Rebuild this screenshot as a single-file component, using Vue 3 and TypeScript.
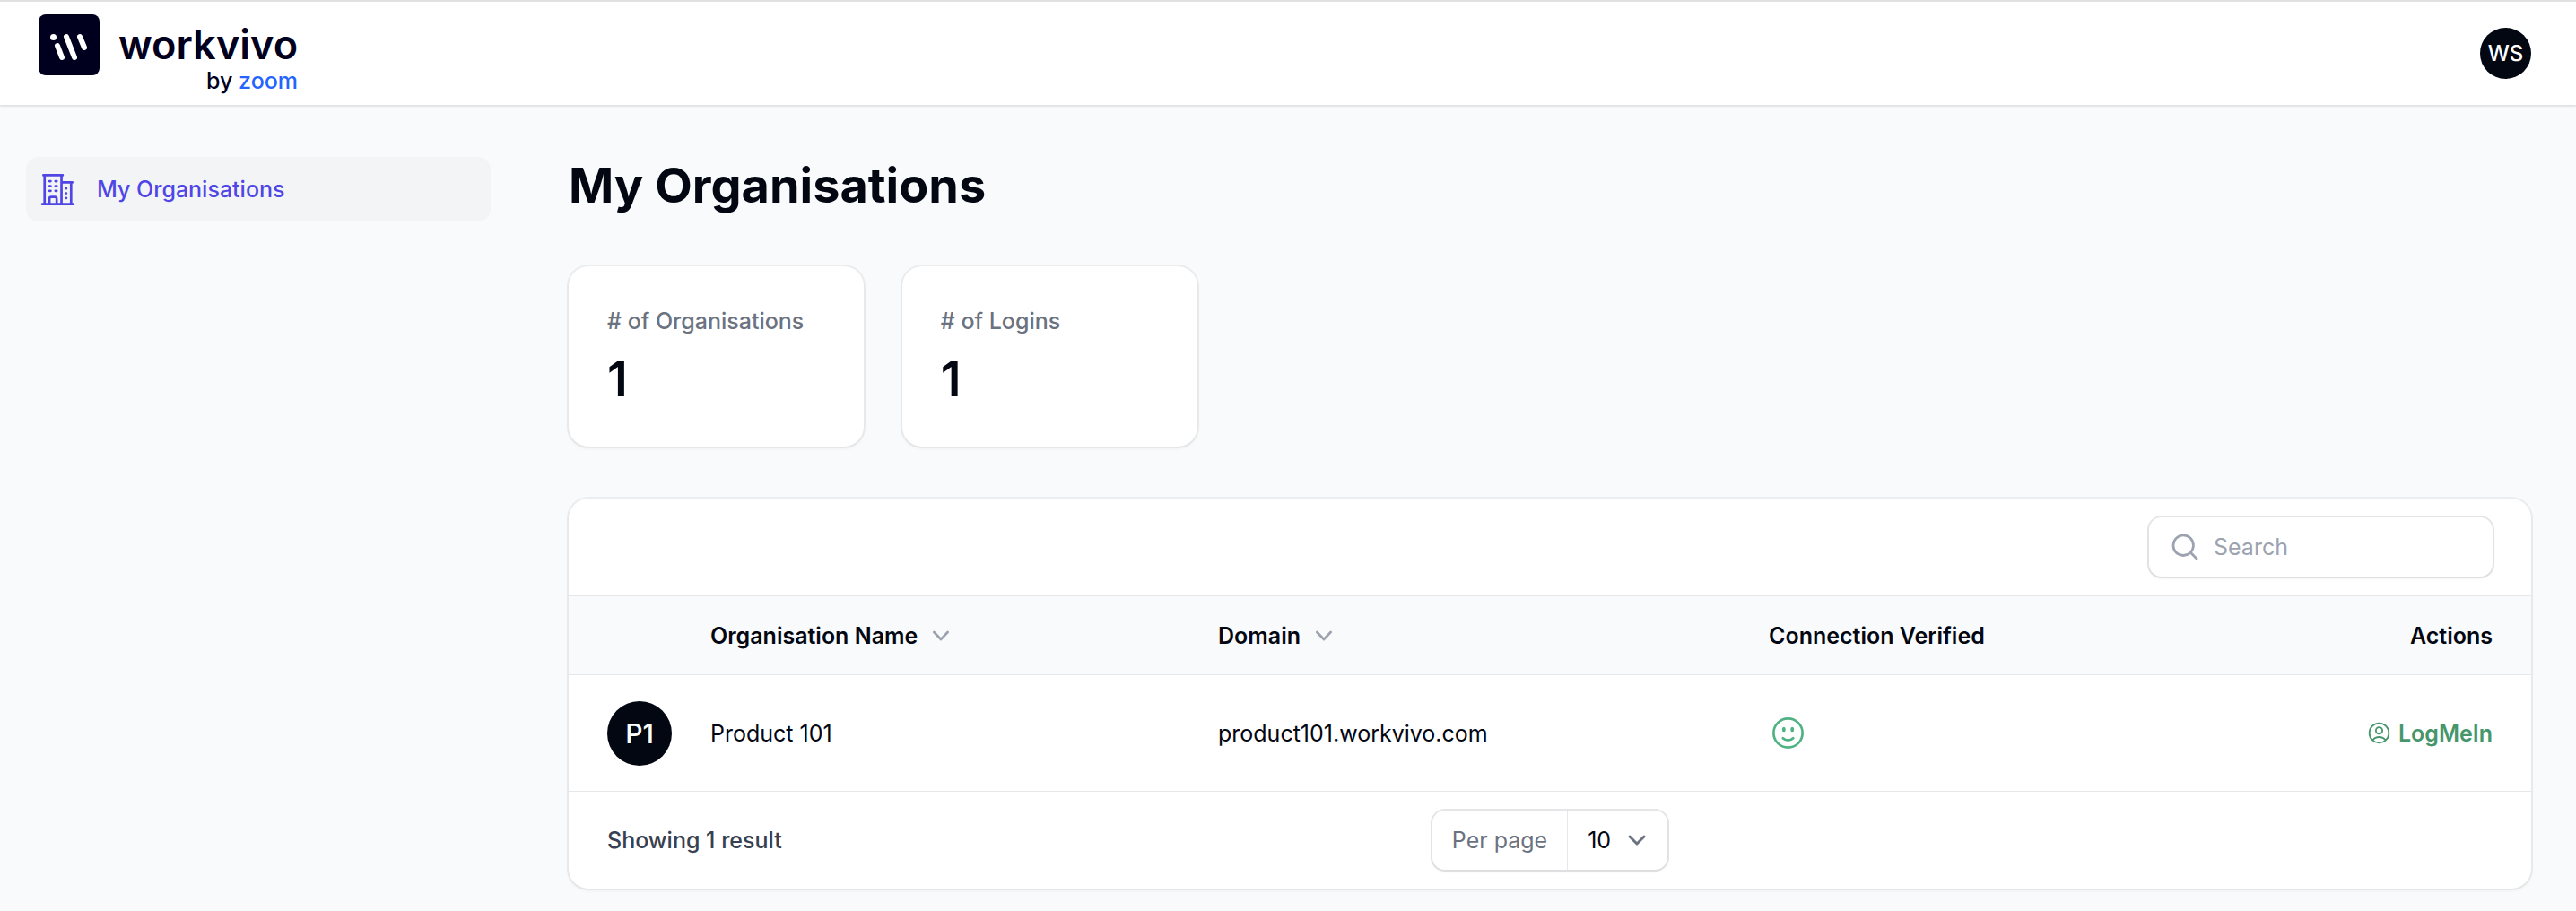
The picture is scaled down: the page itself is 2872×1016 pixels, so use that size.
<script setup lang="ts">
import { computed, ref } from 'vue'

interface Organisation {
  initials: string
  name: string
  domain: string
}

const stats = [
  { label: '# of Organisations', value: 1 },
  { label: '# of Logins', value: 1 },
]

const organisations: Organisation[] = [
  { initials: 'P1', name: 'Product 101', domain: 'product101.workvivo.com' },
]

const search = ref('')
const perPage = ref(10)

const rows = computed(() => {
  const term = search.value.trim().toLowerCase()
  return organisations
    .filter((o) => o.name.toLowerCase().includes(term) || o.domain.includes(term))
    .slice(0, perPage.value)
})

const summary = computed(() => {
  const n = rows.value.length
  return `Showing ${n} result${n === 1 ? '' : 's'}`
})
</script>

<template>
  <div class="page">
    <header class="topbar">
      <a class="brand" href="#" aria-label="workvivo by zoom">
        <svg class="brand-mark" viewBox="0 0 68 68" aria-hidden="true">
          <rect width="68" height="68" rx="8" fill="#00001e" />
          <g stroke="#fff" stroke-width="6" stroke-linecap="round">
            <path d="M21 35 26 48M31 25 40 48M46 25 51 37" />
          </g>
          <circle cx="16.500" cy="25.500" r="3.500" fill="#fff" />
        </svg>
        <span class="brand-words">
          <span class="brand-name">workvivo</span>
          <span class="brand-by">by <span class="brand-zoom">zoom</span></span>
        </span>
      </a>
      <button class="user" type="button" aria-label="User menu">WS</button>
    </header>

    <div class="body">
      <nav class="sidebar">
        <a class="nav-item" href="#">
          <svg class="nav-icon" viewBox="0 0 24 24" fill="none" stroke="currentColor" stroke-width="1.500" stroke-linecap="round" stroke-linejoin="round" aria-hidden="true">
            <path d="M2.250 21h19.500m-18-18v18m10.500-18v18m6-13.500V21M6.750 6.750h.750m-.750 3h.750m-.750 3h.750m3-6h.750m-.750 3h.750m-.750 3h.750M6.750 21v-3.375c0-.621.504-1.125 1.125-1.125h2.250c.621 0 1.125.504 1.125 1.125V21M3 3h12m-.750 4.500H21m-3.750 3.750h.008v.008h-.008v-.008Zm0 3h.008v.008h-.008v-.008Zm0 3h.008v.008h-.008v-.008Z" />
          </svg>
          <span>My Organisations</span>
        </a>
      </nav>

      <main class="main">
        <h1 class="title">My Organisations</h1>

        <section class="stats" aria-label="Statistics">
          <div v-for="stat in stats" :key="stat.label" class="card">
            <span class="card-label">{{ stat.label }}</span>
            <span class="card-value">{{ stat.value }}</span>
          </div>
        </section>

        <section class="panel">
          <div class="toolbar">
            <label class="search">
              <svg class="search-icon" viewBox="0 0 20 20" fill="currentColor" aria-hidden="true">
                <path fill-rule="evenodd" clip-rule="evenodd" d="M9 3.500a5.500 5.500 0 1 0 0 11 5.500 5.500 0 0 0 0-11ZM2 9a7 7 0 1 1 12.452 4.391l3.328 3.329a.750.750 0 1 1-1.060 1.060l-3.329-3.328A7 7 0 0 1 2 9Z" />
              </svg>
              <input v-model="search" class="search-input" type="search" placeholder="Search" aria-label="Search" />
            </label>
          </div>

          <table class="table">
            <thead>
              <tr>
                <th class="col-avatar"></th>
                <th class="col-name">
                  <button class="sort" type="button">
                    Organisation Name
                    <svg class="chevron" viewBox="0 0 20 20" fill="currentColor" aria-hidden="true">
                      <path fill-rule="evenodd" clip-rule="evenodd" d="M5.230 7.210a.750.750 0 0 1 1.060.020L10 11.168l3.710-3.938a.750.750 0 1 1 1.080 1.040l-4.250 4.500a.750.750 0 0 1-1.080 0l-4.250-4.500a.750.750 0 0 1 .020-1.060Z" />
                    </svg>
                  </button>
                </th>
                <th class="col-domain">
                  <button class="sort" type="button">
                    Domain
                    <svg class="chevron" viewBox="0 0 20 20" fill="currentColor" aria-hidden="true">
                      <path fill-rule="evenodd" clip-rule="evenodd" d="M5.230 7.210a.750.750 0 0 1 1.060.020L10 11.168l3.710-3.938a.750.750 0 1 1 1.080 1.040l-4.250 4.500a.750.750 0 0 1-1.080 0l-4.250-4.500a.750.750 0 0 1 .020-1.060Z" />
                    </svg>
                  </button>
                </th>
                <th class="col-verified">Connection Verified</th>
                <th class="col-actions">Actions</th>
              </tr>
            </thead>
            <tbody>
              <tr v-for="row in rows" :key="row.domain">
                <td class="col-avatar"><span class="avatar">{{ row.initials }}</span></td>
                <td>{{ row.name }}</td>
                <td>{{ row.domain }}</td>
                <td>
                  <svg class="smile" viewBox="0 0 24 24" fill="none" stroke="currentColor" stroke-width="1.500" stroke-linecap="round" stroke-linejoin="round" role="img" aria-label="Verified">
                    <path d="M15.182 15.182a4.500 4.500 0 0 1-6.364 0M21 12a9 9 0 1 1-18 0 9 9 0 0 1 18 0ZM9.750 9.750c0 .414-.168.750-.375.750S9 10.164 9 9.750 9.168 9 9.375 9s.375.336.375.750Zm-.375 0h.008v.015h-.008V9.750Zm5.625 0c0 .414-.168.750-.375.750s-.375-.336-.375-.750.168-.750.375-.750.375.336.375.750Zm-.375 0h.008v.015h-.008V9.750Z" />
                  </svg>
                </td>
                <td class="col-actions">
                  <a class="login" href="#">
                    <svg class="login-icon" viewBox="0 0 24 24" fill="none" stroke="currentColor" stroke-width="1.500" stroke-linecap="round" stroke-linejoin="round" aria-hidden="true">
                      <path d="M17.982 18.725A7.488 7.488 0 0 0 12 15.750a7.488 7.488 0 0 0-5.982 2.975m11.963 0a9 9 0 1 0-11.963 0m11.963 0A8.966 8.966 0 0 1 12 21a8.966 8.966 0 0 1-5.982-2.275M15 9.750a3 3 0 1 1-6 0 3 3 0 0 1 6 0Z" />
                    </svg>
                    LogMeIn
                  </a>
                </td>
              </tr>
            </tbody>
          </table>

          <footer class="pager">
            <span class="summary">{{ summary }}</span>
            <div class="per-page">
              <label class="per-page-label" for="per-page">Per page</label>
              <div class="per-page-field">
                <select id="per-page" v-model.number="perPage" class="per-page-select">
                  <option :value="5">5</option>
                  <option :value="10">10</option>
                  <option :value="25">25</option>
                  <option :value="50">50</option>
                </select>
                <svg class="select-chevron" viewBox="0 0 20 20" fill="none" stroke="currentColor" stroke-width="1.500" stroke-linecap="round" stroke-linejoin="round" aria-hidden="true">
                  <path d="m6 8 4 4 4-4" />
                </svg>
              </div>
            </div>
          </footer>
        </section>
      </main>
    </div>
  </div>
</template>

<style>
body {
  background: #f9fafb;
}
</style>

<style scoped>
.page,
.page * {
  box-sizing: border-box;
}

.page {
  min-height: 100vh;
  border-top: 2px solid #e1e1e1;
  background: #f9fafb;
  color: #030712;
  font-family: Inter, 'Liberation Sans', sans-serif;
  font-size: 25px;
  line-height: 36px;
}

button,
input,
select {
  padding: 0;
  border: 0;
  background: none;
  color: inherit;
  font: inherit;
}

a {
  color: inherit;
  text-decoration: none;
}

svg {
  display: block;
  flex: none;
}

.topbar {
  display: flex;
  align-items: center;
  justify-content: space-between;
  height: 115px;
  padding: 0 50px 0 43px;
  background: #fff;
  box-shadow: 0 0 0 2px rgba(3, 7, 18, 0.05), 0 2px 4px rgba(0, 0, 0, 0.05);
  clip-path: inset(0 0 -6px 0);
}

.brand {
  display: flex;
  align-items: flex-start;
  gap: 21px;
  color: #00001e;
}

.brand-mark {
  width: 68px;
  height: 68px;
}

.brand-words {
  display: flex;
  flex-direction: column;
  align-items: flex-end;
  padding-top: 8px;
}

.brand-name {
  font-size: 45px;
  font-weight: 600;
  line-height: 52px;
}

.brand-by {
  font-size: 25px;
  font-weight: 500;
  line-height: 28px;
}

.brand-zoom {
  color: #2563ff;
}

.user,
.avatar {
  display: flex;
  align-items: center;
  justify-content: center;
  border-radius: 50%;
  background: #030712;
  color: #fff;
  font-weight: 500;
}

.user {
  width: 57px;
  height: 57px;
  font-size: 24px;
}

.body {
  display: flex;
}

.sidebar {
  flex: none;
  width: 576px;
  padding: 58px 29px;
}

.nav-item {
  display: flex;
  align-items: center;
  gap: 22px;
  height: 72px;
  padding: 0 14px;
  border-radius: 14px;
  background: #f3f4f6;
  color: #4f46e5;
  font-weight: 500;
}

.nav-icon {
  width: 43px;
  height: 43px;
}

.main {
  display: flex;
  flex: 1;
  flex-direction: column;
  gap: 58px;
  min-width: 0;
  padding: 58px 50px 24px 58px;
}

.title {
  margin: 0;
  font-size: 54px;
  font-weight: 700;
  line-height: 64px;
}

.stats {
  display: grid;
  grid-template-columns: repeat(6, 1fr);
  gap: 43px;
}

.card,
.panel {
  border-radius: 22px;
  background: #fff;
  box-shadow: 0 0 0 2px rgba(3, 7, 18, 0.05), 0 2px 4px rgba(0, 0, 0, 0.05);
}

.card {
  display: flex;
  flex-direction: column;
  gap: 14px;
  padding: 43px;
}

.card-label {
  color: #6b7280;
  font-weight: 500;
  white-space: nowrap;
}

.card-value {
  font-size: 54px;
  font-weight: 600;
  line-height: 65px;
}

.panel {
  overflow: hidden;
}

.toolbar {
  display: flex;
  justify-content: flex-end;
  padding: 21px 43px;
}

.search,
.per-page {
  display: flex;
  align-items: center;
  height: 66px;
  border-radius: 14px;
  box-shadow: 0 0 0 2px rgba(3, 7, 18, 0.1), 0 2px 4px rgba(0, 0, 0, 0.05);
}

.search {
  gap: 14px;
  width: 383px;
  padding: 0 22px;
}

.search-icon {
  width: 36px;
  height: 36px;
  color: #9ca3af;
}

.search-input {
  flex: 1;
  min-width: 0;
  outline: none;
}

.search-input::placeholder {
  color: #9ca3af;
  opacity: 1;
}

.table {
  width: 100%;
  border-collapse: separate;
  border-spacing: 0;
  table-layout: fixed;
}

.table thead tr {
  background: #f9fafb;
}

.table th,
.table td {
  padding: 0 22px;
  border-top: 1px solid #e5e7eb;
  text-align: left;
}

.table th {
  height: 88px;
  font-weight: 600;
}

.table td {
  height: 130px;
}

.table .col-avatar {
  width: 136px;
  padding-left: 43px;
  padding-right: 0;
}

.col-name {
  width: 566px;
}

.col-domain {
  width: 614px;
}

.table .col-actions {
  padding-right: 43px;
  text-align: right;
}

.sort {
  display: flex;
  align-items: center;
  gap: 8px;
}

.chevron {
  width: 36px;
  height: 36px;
  color: #9ca3af;
}

.avatar {
  width: 72px;
  height: 72px;
  font-size: 30px;
}

.smile {
  width: 43px;
  height: 43px;
  color: #4fb283;
}

.login {
  display: flex;
  align-items: center;
  justify-content: flex-end;
  gap: 7px;
  color: #46966c;
  font-weight: 600;
}

.login-icon {
  width: 29px;
  height: 29px;
}

.pager {
  display: grid;
  grid-template-columns: 1fr auto 1fr;
  align-items: center;
  padding: 21px 43px;
  border-top: 1px solid #e5e7eb;
}

.summary {
  color: #374151;
  font-weight: 500;
}

.per-page-label {
  padding: 0 22px;
  color: #6b7280;
}

.per-page-field {
  display: grid;
  align-items: center;
  height: 100%;
  border-left: 1px solid #e5e7eb;
}

.per-page-select {
  grid-area: 1 / 1;
  width: 111px;
  height: 100%;
  padding-left: 22px;
  appearance: none;
  outline: none;
}

.select-chevron {
  grid-area: 1 / 1;
  justify-self: end;
  width: 40px;
  height: 40px;
  margin-right: 14px;
  color: #6b7280;
  pointer-events: none;
}
</style>
